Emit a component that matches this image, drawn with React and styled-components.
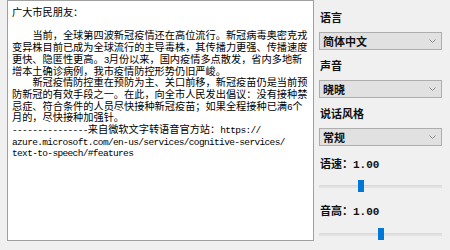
import React from "react";
import styled, { createGlobalStyle } from "styled-components";

const GlobalStyle = createGlobalStyle`
  html, body {
    margin: 0;
    padding: 0;
    background: #f0f0f0;
  }
`;

const CJK = `"Noto Sans CJK SC", "Noto Sans", sans-serif`;
const INDENT = "\u3000\u3000";

const App = () => {
  return (
    <>
      <GlobalStyle />
      <Window>
        <TextPane>
          <Para>广大市民朋友：</Para>
          <Para>&nbsp;</Para>
          <Para>
            {INDENT}当前，全球第四波新冠疫情还在高位流行。新冠病毒奥密克戎变异株目前已成为全球流行的主导毒株，其传播力更强、传播速度更快、隐匿性更高。<Latin>3</Latin>月份以来，国内疫情多点散发，省内多地新增本土确诊病例，我市疫情防控形势仍旧严峻。
          </Para>
          <Para>
            {INDENT}新冠疫情防控重在预防为主、关口前移，新冠疫苗仍是当前预防新冠的有效手段之一。在此，向全市人民发出倡议：没有接种禁忌症、符合条件的人员尽快接种新冠疫苗；如果全程接种已满<Latin>6</Latin>个月的，尽快接种加强针。
          </Para>
          <Para>
            <Latin>---------------</Latin>来自微软文字转语音官方站：<Latin>https://</Latin>
            <br />
            <Latin>azure.microsoft.com/en-us/services/cognitive-services/</Latin>
            <br />
            <Latin>text-to-speech/#features</Latin>
          </Para>
        </TextPane>

        <Side>
          <FieldLabel>语言</FieldLabel>
          <Combo value="简体中文" />
          <FieldLabel $gap={8}>声音</FieldLabel>
          <Combo value="晓晓" />
          <FieldLabel $gap={8}>说话风格</FieldLabel>
          <Combo value="常规" />
          <FieldLabel $gap={10}>
            语速：<Num>1.00</Num>
          </FieldLabel>
          <Slider value={0.333} $gap={8} />
          <FieldLabel $gap={10}>
            音高：<Num>1.00</Num>
          </FieldLabel>
          <Slider value={0.5} $gap={9} />
        </Side>
      </Window>
    </>
  );
};

const Combo = ({ value }) => (
  <ComboBox role="combobox">
    <span>{value}</span>
    <svg width="7" height="4" viewBox="0 0 7 4">
      <polyline points="0.5,0.5 3.5,3.5 6.5,0.5" fill="none" stroke="#8a8a8a" strokeWidth="1" />
    </svg>
  </ComboBox>
);

const Slider = ({ value, $gap }) => (
  <SliderRoot $gap={$gap}>
    <Rail />
    <Thumb style={{ left: `${Math.round(value * 117)}px` }} />
  </SliderRoot>
);

export default App;

const Window = styled.div`
  display: flex;
  align-items: flex-start;
  gap: 5px;
  padding-left: 7px;
  height: 250px;
  box-sizing: border-box;
`;

const TextPane = styled.div`
  box-sizing: border-box;
  width: 307px;
  height: 241px;
  padding: 5px 3px 0 4px;
  background: #ffffff;
  border: 1px solid #a0a0a0;
  font-family: ${CJK};
  font-size: 10.2px;
  line-height: 11.7px;
  color: #000;
  overflow: hidden;
`;

const Para = styled.p`
  margin: 0;
`;

const Latin = styled.span`
  font-family: "Liberation Mono", "DejaVu Sans Mono", monospace;
  font-size: 9.5px;
  letter-spacing: -0.65px;
  line-height: 0;
`;

const Side = styled.div`
  width: 123px;
  display: flex;
  flex-direction: column;
  padding-top: 10px;
`;

const FieldLabel = styled.div`
  height: 15px;
  line-height: 15px;
  margin-top: ${(p) => p.$gap || 0}px;
  padding-left: 1px;
  font-family: ${CJK};
  font-size: 11px;
  font-weight: 700;
  color: #111;
  white-space: nowrap;
`;

const Num = styled.span`
  font-family: "Liberation Mono", monospace;
  font-weight: 700;
  font-size: 11px;
`;

const ComboBox = styled.div`
  box-sizing: border-box;
  height: 18px;
  margin-top: 7px;
  display: flex;
  align-items: center;
  justify-content: space-between;
  padding: 0 5px 0 3px;
  background: #e1e1e1;
  border: 1px solid #adadad;
  font-family: ${CJK};
  font-size: 11px;
  font-weight: 700;
  color: #111;
`;

const SliderRoot = styled.div`
  position: relative;
  height: 14px;
  margin-top: ${(p) => p.$gap}px;
  display: flex;
  align-items: center;
`;

const Rail = styled.div`
  width: 100%;
  height: 3px;
  background: #e2e2e2;
  border-top: 1px solid #d9d9d9;
  box-sizing: border-box;
`;

const Thumb = styled.div`
  position: absolute;
  top: 1px;
  width: 6px;
  height: 12px;
  background: #0078d7;
`;
